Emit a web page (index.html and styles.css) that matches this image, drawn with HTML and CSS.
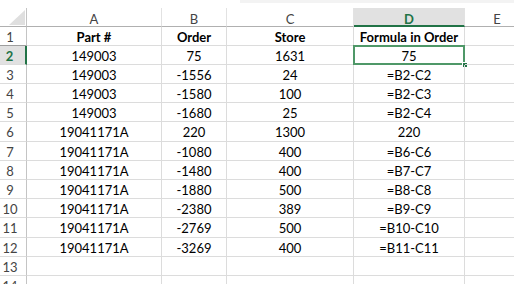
FILE: index.html
```html
<!DOCTYPE html>
<html>
<head>
<meta charset="utf-8">
<link rel="stylesheet" href="styles.css">
</head>
<body>
<div class="topbar"><div class="strip"></div></div>
<div class="sheet">
  <div class="row hdr">
    <div class="c rh corner"><span class="tri"></span></div>
    <div class="c ch a">A</div>
    <div class="c ch b">B</div>
    <div class="c ch cc">C</div>
    <div class="c ch d sel">D</div>
    <div class="c ch e">E</div>
  </div>
  <div class="row">
    <div class="c rh pre">1</div>
    <div class="c a bold">Part #</div>
    <div class="c b bold">Order</div>
    <div class="c cc bold">Store</div>
    <div class="c d bold">Formula in Order</div>
    <div class="c e"></div>
  </div>
  <div class="row">
    <div class="c rh sel">2</div>
    <div class="c a">149003</div>
    <div class="c b">75</div>
    <div class="c cc">1631</div>
    <div class="c d active">75<span class="handle"></span></div>
    <div class="c e"></div>
  </div>
  <div class="row">
    <div class="c rh">3</div>
    <div class="c a">149003</div>
    <div class="c b">-1556</div>
    <div class="c cc">24</div>
    <div class="c d">=B2-C2</div>
    <div class="c e"></div>
  </div>
  <div class="row">
    <div class="c rh">4</div>
    <div class="c a">149003</div>
    <div class="c b">-1580</div>
    <div class="c cc">100</div>
    <div class="c d">=B2-C3</div>
    <div class="c e"></div>
  </div>
  <div class="row">
    <div class="c rh">5</div>
    <div class="c a">149003</div>
    <div class="c b">-1680</div>
    <div class="c cc">25</div>
    <div class="c d">=B2-C4</div>
    <div class="c e"></div>
  </div>
  <div class="row tall">
    <div class="c rh">6</div>
    <div class="c a">19041171A</div>
    <div class="c b">220</div>
    <div class="c cc">1300</div>
    <div class="c d">220</div>
    <div class="c e"></div>
  </div>
  <div class="row">
    <div class="c rh">7</div>
    <div class="c a">19041171A</div>
    <div class="c b">-1080</div>
    <div class="c cc">400</div>
    <div class="c d">=B6-C6</div>
    <div class="c e"></div>
  </div>
  <div class="row">
    <div class="c rh">8</div>
    <div class="c a">19041171A</div>
    <div class="c b">-1480</div>
    <div class="c cc">400</div>
    <div class="c d">=B7-C7</div>
    <div class="c e"></div>
  </div>
  <div class="row">
    <div class="c rh">9</div>
    <div class="c a">19041171A</div>
    <div class="c b">-1880</div>
    <div class="c cc">500</div>
    <div class="c d">=B8-C8</div>
    <div class="c e"></div>
  </div>
  <div class="row">
    <div class="c rh">10</div>
    <div class="c a">19041171A</div>
    <div class="c b">-2380</div>
    <div class="c cc">389</div>
    <div class="c d">=B9-C9</div>
    <div class="c e"></div>
  </div>
  <div class="row tall">
    <div class="c rh">11</div>
    <div class="c a">19041171A</div>
    <div class="c b">-2769</div>
    <div class="c cc">500</div>
    <div class="c d">=B10-C10</div>
    <div class="c e"></div>
  </div>
  <div class="row">
    <div class="c rh">12</div>
    <div class="c a">19041171A</div>
    <div class="c b">-3269</div>
    <div class="c cc">400</div>
    <div class="c d">=B11-C11</div>
    <div class="c e"></div>
  </div>
  <div class="row">
    <div class="c rh">13</div>
    <div class="c a"></div>
    <div class="c b"></div>
    <div class="c cc"></div>
    <div class="c d"></div>
    <div class="c e"></div>
  </div>
  <div class="row">
    <div class="c rh">14</div>
    <div class="c a"></div>
    <div class="c b"></div>
    <div class="c cc"></div>
    <div class="c d"></div>
    <div class="c e"></div>
  </div>
</div>
</body>
</html>
```

FILE: styles.css
```css
html, body {
  margin: 0;
  padding: 0;
  background: #ffffff;
  overflow: hidden;
}
body {
  font-family: Lato, "Open Sans", "Liberation Sans", sans-serif;
  font-size: 13px;
  color: #000000;
  width: 514px;
  height: 284px;
}
.topbar {
  height: 8px;
  display: flex;
}
.strip {
  margin-left: 240px;
  flex: 1;
  height: 3px;
  background: #f3f3f3;
}
.sheet {
  display: flex;
  flex-direction: column;
  width: 514px;
}
.row {
  display: flex;
  height: 19px;
}
.row.tall {
  height: 20px;
}
.c {
  box-sizing: border-box;
  flex: none;
  border-right: 1px solid #dcdcdc;
  border-bottom: 1px solid #dcdcdc;
  text-align: center;
  white-space: nowrap;
  line-height: 18px;
  padding-top: 1px;
  position: relative;
}
.rh {
  width: 27px;
  padding-right: 6px;
  color: #444444;
  border-right-color: #c4c4c4;
}
.a { width: 135px; }
.b { width: 65px; }
.cc { width: 127px; }
.d { width: 111px; }
.e {
  width: 49px;
  padding-left: 15px;
  border-right: none;
}
.bold { font-weight: 700; }

.hdr .c {
  border-bottom-color: #b0b0b0;
  color: #444444;
  padding-top: 2px;
}
.ch {
  border-right-color: #e2e2e2;
}
.corner .tri {
  position: absolute;
  right: 1px;
  bottom: 1px;
  width: 0;
  height: 0;
  border-left: 16px solid transparent;
  border-bottom: 15px solid #dfdfdf;
}
.hdr .ch.sel {
  background: #e1e1e1;
  color: #217346;
  font-weight: 700;
  border-bottom: 2px solid #217346;
}
.rh.pre {
  border-bottom-color: #9e9e9e;
}
.rh.sel {
  background: #e1e1e1;
  color: #217346;
  font-weight: 700;
  border-right: 2px solid #217346;
}
.active::before {
  content: "";
  position: absolute;
  left: -1px;
  top: -1px;
  right: -1px;
  bottom: -1px;
  border: 2px solid #4f9868;
}
.handle {
  position: absolute;
  right: -3px;
  bottom: -3px;
  width: 4px;
  height: 4px;
  background: #217346;
  border-left: 1px solid #ffffff;
  border-top: 1px solid #ffffff;
}
```
